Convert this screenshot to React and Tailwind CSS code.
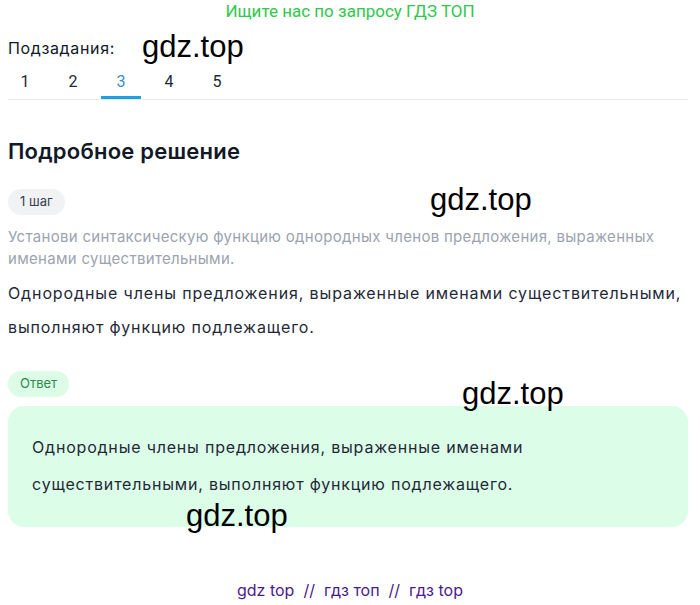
const tabs = ['1', '2', '3', '4', '5']

function Mark({ className }) {
  return (
    <span
      className={`absolute text-[31px] leading-none text-black pointer-events-none ${className}`}
      style={{ fontFamily: '"Liberation Sans", Arial, sans-serif' }}
    >
      gdz.top
    </span>
  )
}

export default function App() {
  return (
    <div className="relative w-[700px] h-[605px] bg-white overflow-hidden flex flex-col font-['Inter',sans-serif]">
      <div className="h-6 flex items-center justify-center text-[17px] text-[#2fc84a] font-['Roboto',sans-serif]">
        Ищите нас по запросу ГДЗ ТОП
      </div>

      <div className="pl-2 pr-3">
        {/* Subtasks */}
        <div className="mt-[13px] text-[16px] leading-[22px] tracking-[0.04em] text-[#111827]">Подзадания:</div>
        <div className="mt-[8px] flex border-b border-[#e5e7eb]">
          <div className="-ml-[3px] flex gap-2">
            {tabs.map((t) => (
              <div
                key={t}
                className={`w-10 h-[32px] flex items-center justify-center text-[16px] font-['Roboto',sans-serif] border-b-[3px] ${
                  t === '3' ? 'text-[#3a8fc7] border-[#1ea1e3]' : 'text-[#1f2937] border-transparent'
                }`}
              >
                {t}
              </div>
            ))}
          </div>
        </div>

        <h2 className="mt-[36px] text-[22px] leading-[30px] tracking-[0.01em] font-semibold text-[#111827]">
          Подробное решение
        </h2>

        <div className="mt-[23px] inline-flex items-center h-[26px] px-[12px] rounded-full bg-[#f1f2f4] text-[13px] text-[#374151]">
          1 шаг
        </div>

        <p className="mt-[11px] text-[15px] leading-[22px] tracking-[0.02em] text-[#9ca3af]">
          Установи синтаксическую функцию однородных членов предложения, выраженных именами существительными.
        </p>

        <p className="mt-[6px] text-[16px] leading-[34px] tracking-[0.055em] text-[#1f2937]">
          Однородные члены предложения, выраженные именами существительными, выполняют функцию подлежащего.
        </p>

        <div className="mt-[27px] inline-flex items-center h-[26px] px-[12px] rounded-full bg-[#dcfce7] text-[13px] text-[#2b8a4a]">
          Ответ
        </div>

        <div className="mt-[9px] rounded-2xl bg-[#dcfde7] px-6 pt-[23px] pb-[24px] text-[16px] leading-[37px] tracking-[0.05em] text-[#1f2937]">
          Однородные члены предложения, выраженные именами существительными, выполняют функцию подлежащего.
        </div>
      </div>

      <div className="mt-auto pb-[3px] text-center text-[16px] leading-6 text-[#4a1a8c]">
        gdz top &nbsp;//&nbsp; гдз топ &nbsp;//&nbsp; гдз top
      </div>

      <Mark className="left-[142px] top-[31px]" />
      <Mark className="left-[430px] top-[184px]" />
      <Mark className="left-[462px] top-[378px]" />
      <Mark className="left-[186px] top-[500px]" />
    </div>
  )
}
